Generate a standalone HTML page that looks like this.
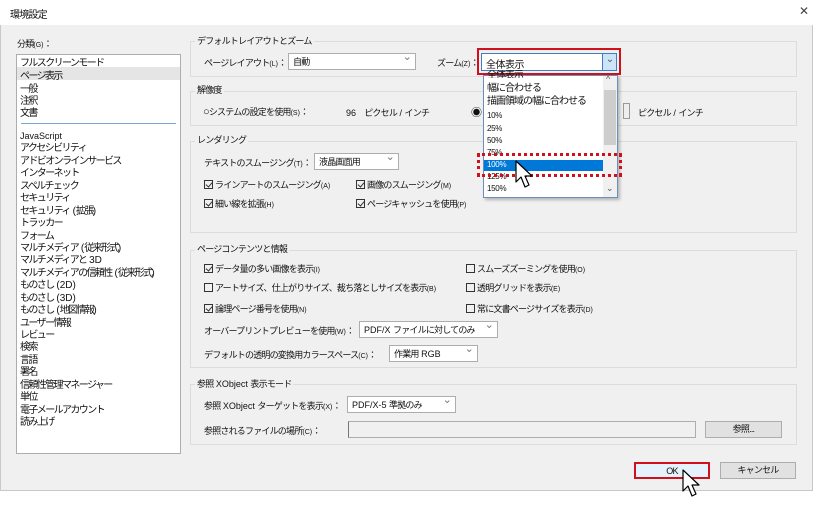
<!DOCTYPE html>
<html><head><meta charset="utf-8"><style>
*{margin:0;padding:0;box-sizing:border-box}
body{width:815px;height:515px;background:#fff;position:relative;overflow:hidden;font-family:"Liberation Sans","Noto Sans CJK JP",sans-serif;font-size:9px;letter-spacing:-0.8px;color:#111}
.a{position:absolute;white-space:nowrap}
i{font-style:normal;letter-spacing:0}
.dlg{position:absolute;left:0;top:0;width:813px;height:491px;background:#f0f0f0;border:1px solid #c8c8c8}
.title{position:absolute;left:0;top:0;width:813px;height:25px;background:#fff}
.grp{position:absolute;border:1px solid #dcdcdc}
.gt{position:absolute;background:#f0f0f0;padding:0 2px}
.sel{position:absolute;background:#fff;border:1px solid #adadad;height:17px;padding:2px 4px;line-height:12px}
.sel:after{content:"⌄";position:absolute;right:4px;top:-3px;color:#777;font-size:11px}
.cb{display:inline-block;width:9px;height:9px;border:1px solid #333;margin-right:2px;vertical-align:-1px;position:relative}
.cb.on:after{content:"";position:absolute;left:2px;top:0px;width:3px;height:5px;border:solid #333;border-width:0 1px 1px 0;transform:rotate(40deg)}
.li{position:absolute;left:20px;font-size:10px;letter-spacing:-1.6px}
.btn{position:absolute;background:#e1e1e1;border:1px solid #adadad;height:17px;text-align:center;line-height:15px}
small{font-size:7px;letter-spacing:0}
.dd{position:absolute;left:487px;font-size:10px;letter-spacing:-1px}
.dp{position:absolute;left:487px;font-size:8px;letter-spacing:-0.3px}
</style></head><body>
<div class="dlg"></div>
<div class="title"></div>
<div class="a" style="left:10px;top:6px;font-size:10px">環境設定</div>
<div class="a" style="left:799px;top:4px;font-size:12px;color:#444;letter-spacing:0">✕</div>

<div class="a" style="left:17px;top:37px">分類<small>(G)</small>：</div>
<div class="a" style="left:16px;top:54px;width:165px;height:400px;background:#fff;border:1px solid #adadad"></div>
<div class="a" style="left:17px;top:67px;width:163px;height:13px;background:#e5e5e5"></div>
<div class="a" style="left:21px;top:123px;width:155px;height:1px;background:#7aa7d6"></div>
<div class="li" style="top:54px">フルスクリーンモード</div>
<div class="li" style="top:67px">ページ表示</div>
<div class="li" style="top:80px">一般</div>
<div class="li" style="top:92px">注釈</div>
<div class="li" style="top:104px">文書</div>
<div style="position:absolute;left:20px;top:130px;font-size:10px;letter-spacing:-1.6px;line-height:12.43px"><i style="font-size:9px">JavaScript</i><br>アクセシビリティ<br>アドビオンラインサービス<br>インターネット<br>スペルチェック<br>セキュリティ<br>セキュリティ<i> (</i>拡張<i>)</i><br>トラッカー<br>フォーム<br>マルチメディア<i> (</i>従来形式<i>)</i><br>マルチメディアと<i> 3D</i><br>マルチメディアの信頼性<i> (</i>従来形式<i>)</i><br>ものさし<i> (2D)</i><br>ものさし<i> (3D)</i><br>ものさし<i> (</i>地図情報<i>)</i><br>ユーザー情報<br>レビュー<br>検索<br>言語<br>署名<br>信頼性管理マネージャー<br>単位<br>電子メールアカウント<br>読み上げ</div>

<!-- group1 -->
<div class="grp" style="left:190px;top:41px;width:607px;height:36px"></div>
<div class="gt a" style="left:195px;top:34px">デフォルトレイアウトとズーム</div>
<div class="a" style="left:204px;top:56px">ページレイアウト<small>(L)</small>：</div>
<div class="sel" style="left:288px;top:53px;width:128px">自動</div>
<div class="a" style="left:437px;top:56px">ズーム<small>(Z)</small>：</div>

<!-- group2 -->
<div class="grp" style="left:190px;top:91px;width:607px;height:35px"></div>
<div class="gt a" style="left:195px;top:83px">解像度</div>
<div class="a" style="left:203px;top:105px"><span style="font-size:11px">○</span>システムの設定を使用<small>(S)</small>：</div>
<div class="a" style="left:346px;top:106px"><i>96</i>　ピクセル<i> / </i>インチ</div>
<div class="a" style="left:471px;top:104px;font-size:11px">◉</div>
<div class="a" style="left:623px;top:103px;width:7px;height:16px;border:1px solid #999;background:#eee"></div>
<div class="a" style="left:638px;top:106px">ピクセル<i> / </i>インチ</div>

<!-- group3 -->
<div class="grp" style="left:190px;top:141px;width:607px;height:92px"></div>
<div class="gt a" style="left:195px;top:133px">レンダリング</div>
<div class="a" style="left:204px;top:156px">テキストのスムージング<small>(T)</small>：</div>
<div class="sel" style="left:314px;top:153px;width:85px">液晶画面用</div>
<div class="a" style="left:204px;top:178px"><span class="cb on"></span>ラインアートのスムージング<small>(A)</small></div>
<div class="a" style="left:356px;top:178px"><span class="cb on"></span>画像のスムージング<small>(M)</small></div>
<div class="a" style="left:204px;top:197px"><span class="cb on"></span>細い線を拡張<small>(H)</small></div>
<div class="a" style="left:356px;top:197px"><span class="cb on"></span>ページキャッシュを使用<small>(P)</small></div>

<!-- group4 -->
<div class="grp" style="left:190px;top:250px;width:607px;height:118px"></div>
<div class="gt a" style="left:195px;top:242px">ページコンテンツと情報</div>
<div class="a" style="left:204px;top:262px"><span class="cb on"></span>データ量の多い画像を表示<small>(I)</small></div>
<div class="a" style="left:466px;top:262px"><span class="cb"></span>スムーズズーミングを使用<small>(O)</small></div>
<div class="a" style="left:204px;top:281px"><span class="cb"></span>アートサイズ、仕上がりサイズ、裁ち落としサイズを表示<small>(B)</small></div>
<div class="a" style="left:466px;top:281px"><span class="cb"></span>透明グリッドを表示<small>(E)</small></div>
<div class="a" style="left:204px;top:302px"><span class="cb on"></span>論理ページ番号を使用<small>(N)</small></div>
<div class="a" style="left:466px;top:302px"><span class="cb"></span>常に文書ページサイズを表示<small>(D)</small></div>
<div class="a" style="left:204px;top:324px">オーバープリントプレビューを使用<small>(W)</small>：</div>
<div class="sel" style="left:359px;top:321px;width:139px"><i>PDF/X </i>ファイルに対してのみ</div>
<div class="a" style="left:204px;top:348px">デフォルトの透明の変換用カラースペース<small>(C)</small>：</div>
<div class="sel" style="left:389px;top:345px;width:89px">作業用<i> RGB</i></div>

<!-- group5 -->
<div class="grp" style="left:190px;top:384px;width:607px;height:61px"></div>
<div class="gt a" style="left:195px;top:377px">参照<i> XObject </i>表示モード</div>
<div class="a" style="left:204px;top:399px">参照<i> XObject </i>ターゲットを表示<small>(X)</small>：</div>
<div class="sel" style="left:347px;top:396px;width:109px"><i>PDF/X-5 </i>準拠のみ</div>
<div class="a" style="left:204px;top:424px">参照されるファイルの場所<small>(C)</small>：</div>
<div class="a" style="left:348px;top:421px;width:348px;height:17px;border:1px solid #adadad;border-left-color:#777;background:#f0f0f0"></div>
<div class="btn" style="left:705px;top:421px;width:77px">参照...</div>

<div class="btn" style="left:634px;top:462px;width:76px;border:2px solid #d0101a;background:#e5f1fb">OK</div>
<div class="btn" style="left:720px;top:462px;width:76px">キャンセル</div>

<!-- zoom select + dropdown -->
<div class="a" style="left:477px;top:48px;width:144px;height:27px;border:2px solid #d0101a"></div>
<div class="a" style="left:481px;top:53px;width:136px;height:18px;background:#fff;border:1px solid #3c7fc4;font-size:10px;letter-spacing:-0.5px;padding:2px 4px">全体表示</div>
<div class="a" style="left:602px;top:54px;width:14px;height:16px;background:#cce4f7;border-left:1px solid #3c7fc4;color:#555;font-size:10px;text-align:center;line-height:12px">⌄</div>
<div class="a" style="left:483px;top:75px;width:135px;height:123px;background:#fff;border:1px solid #6b8fb8;box-shadow:2px 2px 3px rgba(0,0,0,.25)"></div>
<div class="a" style="left:603px;top:76px;width:14px;height:121px;background:#f0f0f0"></div>
<div class="a" style="left:604px;top:90px;width:12px;height:55px;background:#cdcdcd"></div>
<div class="a" style="left:606px;top:74px;font-size:9px;color:#555">^</div>
<div class="a" style="left:606px;top:183px;font-size:9px;color:#555">⌄</div>
<div class="a" style="left:484px;top:160px;width:119px;height:11px;background:#0078d7"></div>
<div class="dd" style="top:70px;height:8px;overflow:hidden;line-height:12px">全体表示</div>
<div class="dd" style="top:79px">幅に合わせる</div>
<div class="dd" style="top:92px">描画領域の幅に合わせる</div>
<div class="dp" style="top:111px">10%</div>
<div class="dp" style="top:124px">25%</div>
<div class="dp" style="top:136px">50%</div>
<div class="dp" style="top:148px">75%</div>
<div class="dp" style="top:160px;color:#fff">100%</div>
<div class="dp" style="top:172px">125%</div>
<div class="dp" style="top:184px">150%</div>
<div class="a" style="left:477px;top:153px;width:145px;height:24px;border:3px dotted #d0101a"></div>

<svg class="a" style="left:515px;top:160px" width="24" height="32" viewBox="0 0 24 32"><path d="M1 1 L1 22 L6 17 L10 27 L14 25 L10 16 L17 16 Z" fill="#fff" stroke="#000" stroke-width="1.2" stroke-linejoin="round"/></svg>
<svg class="a" style="left:682px;top:469px" width="24" height="32" viewBox="0 0 24 32"><path d="M1 1 L1 22 L6 17 L10 27 L14 25 L10 16 L17 16 Z" fill="#fff" stroke="#000" stroke-width="1.2" stroke-linejoin="round"/></svg>
</body></html>
